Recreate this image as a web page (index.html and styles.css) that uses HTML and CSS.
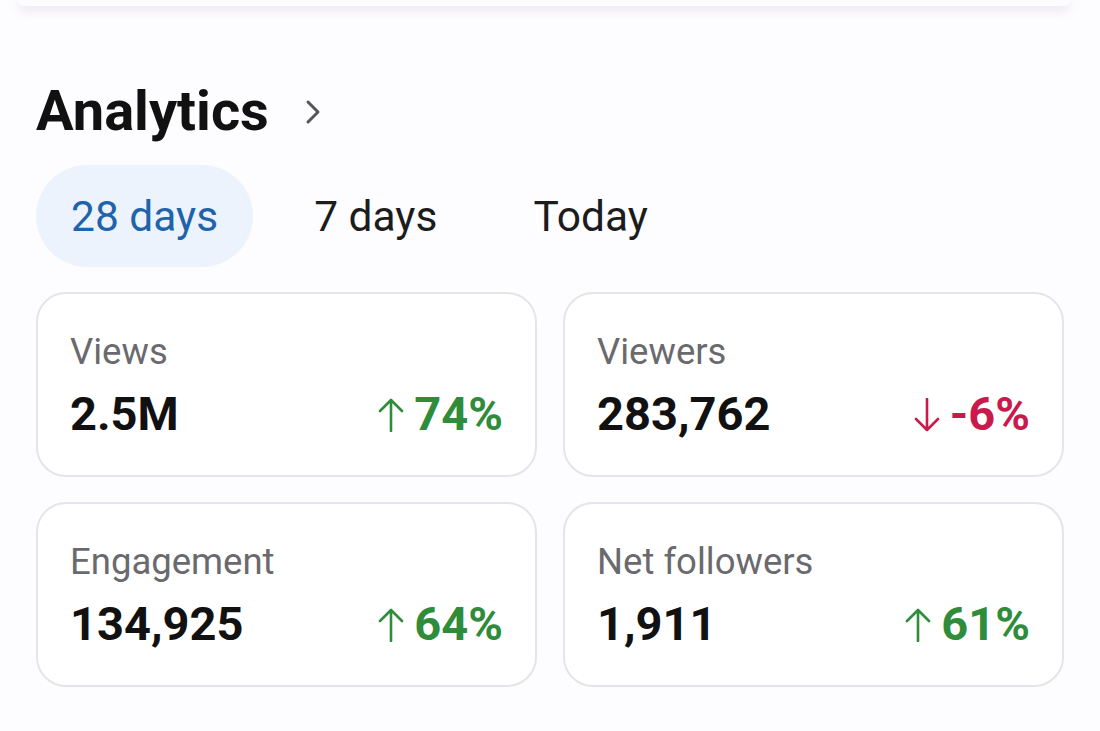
FILE: index.html
```html
<!DOCTYPE html>
<html lang="en">
<head>
<meta charset="utf-8">
<title>Analytics</title>
<link rel="stylesheet" href="styles.css">
</head>
<body>
<div class="prev-card"></div>
<main class="page">
  <header class="title-row">
    <h1 class="title">Analytics</h1>
    <svg class="chevron" width="16" height="28" viewBox="0 0 16 28" aria-hidden="true">
      <path d="M3 4 L13 14 L3 24" fill="none" stroke="#555" stroke-width="3" stroke-linecap="round" stroke-linejoin="round"/>
    </svg>
  </header>
  <nav class="tabs">
    <span class="tab active">28 days</span>
    <span class="tab">7 days</span>
    <span class="tab">Today</span>
  </nav>
  <section class="grid">
    <div class="card">
      <div class="label">Views</div>
      <div class="row">
        <span class="value">2.5M</span>
        <span class="delta up">
          <svg class="arrow" width="26" height="34" viewBox="0 0 26 34" aria-hidden="true"><path d="M13 33 V2 M2 13 L13 2 L24 13" fill="none" stroke="currentColor" stroke-width="2.6" stroke-linecap="round" stroke-linejoin="round"/></svg>
          74%
        </span>
      </div>
    </div>
    <div class="card">
      <div class="label">Viewers</div>
      <div class="row">
        <span class="value">283,762</span>
        <span class="delta down">
          <svg class="arrow" width="26" height="34" viewBox="0 0 26 34" aria-hidden="true"><path d="M13 1 V32 M2 21 L13 32 L24 21" fill="none" stroke="currentColor" stroke-width="2.6" stroke-linecap="round" stroke-linejoin="round"/></svg>
          -6%
        </span>
      </div>
    </div>
    <div class="card">
      <div class="label">Engagement</div>
      <div class="row">
        <span class="value">134,925</span>
        <span class="delta up">
          <svg class="arrow" width="26" height="34" viewBox="0 0 26 34" aria-hidden="true"><path d="M13 33 V2 M2 13 L13 2 L24 13" fill="none" stroke="currentColor" stroke-width="2.6" stroke-linecap="round" stroke-linejoin="round"/></svg>
          64%
        </span>
      </div>
    </div>
    <div class="card">
      <div class="label">Net followers</div>
      <div class="row">
        <span class="value">1,911</span>
        <span class="delta up">
          <svg class="arrow" width="26" height="34" viewBox="0 0 26 34" aria-hidden="true"><path d="M13 33 V2 M2 13 L13 2 L24 13" fill="none" stroke="currentColor" stroke-width="2.6" stroke-linecap="round" stroke-linejoin="round"/></svg>
          61%
        </span>
      </div>
    </div>
  </section>
</main>
</body>
</html>
```

FILE: styles.css
```css
* { box-sizing: border-box; }

html, body {
  margin: 0;
  padding: 0;
  background: #fdfcfe;
  font-family: Roboto, "Noto Sans", sans-serif;
  color: #111;
}

body {
  width: 1100px;
  height: 731px;
  overflow: hidden;
}

.prev-card {
  height: 6px;
  margin: 0 30px 0 18px;
  background: #fdfcfe;
  border-radius: 0 0 26px 26px;
  box-shadow: 0 3px 12px rgba(120, 100, 150, 0.22);
}

.page {
  padding: 0 36px;
}

.title-row {
  display: flex;
  align-items: center;
  gap: 36px;
  margin-top: 77px;
  height: 56px;
}

.title {
  margin: 0;
  font-size: 56px;
  line-height: 56px;
  font-weight: 700;
  color: #111;
}

.chevron {
  margin-top: 2px;
}

.tabs {
  display: flex;
  gap: 26px;
  margin-top: 26px;
}

.tab {
  display: flex;
  align-items: center;
  height: 102px;
  padding: 0 35px;
  border-radius: 51px;
  font-size: 42.5px;
  color: #1c1c1c;
}

.tab.active {
  background: #edf3fc;
  color: #1f63ab;
}

.grid {
  display: grid;
  grid-template-columns: 1fr 1fr;
  column-gap: 26px;
  row-gap: 25px;
  margin-top: 25px;
}

.card {
  height: 185px;
  border: 2px solid #e6e4ea;
  border-radius: 30px;
  background: #fff;
  padding: 38px 32px 0 32px;
}

.label {
  font-size: 36.5px;
  line-height: 40px;
  color: #6a6a6e;
}

.row {
  display: flex;
  justify-content: space-between;
  align-items: center;
  margin-top: 16px;
}

.value {
  font-size: 47px;
  line-height: 52px;
  font-weight: 700;
  color: #111;
}

.delta {
  display: flex;
  align-items: center;
  gap: 10px;
  font-size: 47px;
  line-height: 52px;
  font-weight: 700;
}

.delta.up { color: #2f8c3b; }
.delta.down { color: #c81a4c; }

.arrow {
  display: block;
  margin-top: 2px;
}
```
